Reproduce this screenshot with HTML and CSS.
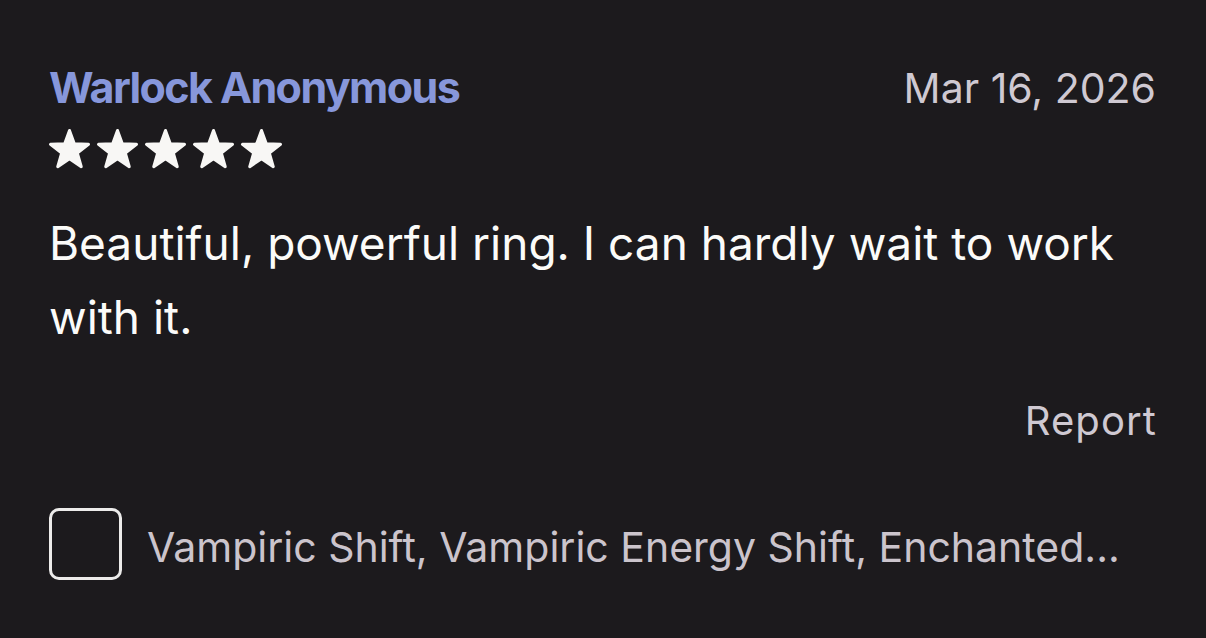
FILE: index.html
```html
<!DOCTYPE html>
<html>
<head>
<meta charset="utf-8">
<link rel="stylesheet" href="styles.css">
</head>
<body>
<div class="review">
  <div class="head">
    <span class="name">Warlock Anonymous</span>
    <span class="date">Mar 16, 2026</span>
  </div>
  <div class="stars">
    <svg viewBox="0 0 41 39" class="star"><path d="M20.5 1.5L25.32 14.87L39.52 15.32L28.3 24.03L32.26 37.68L20.5 29.7L8.74 37.68L12.7 24.03L1.48 15.32L15.68 14.87Z"/></svg>
    <svg viewBox="0 0 41 39" class="star"><path d="M20.5 1.5L25.32 14.87L39.52 15.32L28.3 24.03L32.26 37.68L20.5 29.7L8.74 37.68L12.7 24.03L1.48 15.32L15.68 14.87Z"/></svg>
    <svg viewBox="0 0 41 39" class="star"><path d="M20.5 1.5L25.32 14.87L39.52 15.32L28.3 24.03L32.26 37.68L20.5 29.7L8.74 37.68L12.7 24.03L1.48 15.32L15.68 14.87Z"/></svg>
    <svg viewBox="0 0 41 39" class="star"><path d="M20.5 1.5L25.32 14.87L39.52 15.32L28.3 24.03L32.26 37.68L20.5 29.7L8.74 37.68L12.7 24.03L1.48 15.32L15.68 14.87Z"/></svg>
    <svg viewBox="0 0 41 39" class="star"><path d="M20.5 1.5L25.32 14.87L39.52 15.32L28.3 24.03L32.26 37.68L20.5 29.7L8.74 37.68L12.7 24.03L1.48 15.32L15.68 14.87Z"/></svg>
  </div>
  <p class="text">Beautiful, powerful ring. I can hardly wait to work with it.</p>
  <div class="report-row"><span class="report">Report</span></div>
  <div class="item">
    <span class="checkbox"></span>
    <span class="item-text">Vampiric Shift, Vampiric Energy Shift, Enchanted...</span>
  </div>
</div>
</body>
</html>
```

FILE: styles.css
```css
html, body {
  margin: 0;
  padding: 0;
  background: #1c1a1d;
}
body {
  width: 1206px;
  height: 638px;
  overflow: hidden;
  font-family: Inter, "Liberation Sans", sans-serif;
}
.review {
  padding: 61px 50px 0 49px;
  display: flex;
  flex-direction: column;
}
.head {
  display: flex;
  justify-content: space-between;
  align-items: baseline;
  line-height: 52px;
}
.name {
  color: #8797db;
  font-weight: 700;
  font-size: 43px;
  letter-spacing: -1.6px;
}
.date {
  color: #cfc9d2;
  font-size: 41px;
}
.stars {
  display: flex;
  gap: 7px;
  margin-top: 15px;
}
.star {
  width: 41px;
  height: 39px;
  overflow: visible;
  fill: #f8f7f5;
  stroke: #f8f7f5;
  stroke-width: 3;
  stroke-linejoin: round;
}
.text {
  margin: 38px 0 0;
  color: #fbfbf9;
  font-size: 46px;
  line-height: 74px;
}
.report-row {
  display: flex;
  justify-content: flex-end;
  margin-top: 43px;
}
.report {
  color: #cfc9d2;
  font-size: 40px;
  line-height: 48px;
  letter-spacing: 1.1px;
  margin-right: -1px;
}
.item {
  display: flex;
  align-items: flex-start;
  gap: 25px;
  margin-top: 63px;
}
.checkbox {
  box-sizing: border-box;
  width: 73px;
  height: 72px;
  border: 3px solid #ecebea;
  border-radius: 10px;
  flex: none;
}
.item-text {
  margin-top: 15px;
  color: #cbc4cc;
  font-size: 41px;
  line-height: 48px;
  white-space: nowrap;
}
```
